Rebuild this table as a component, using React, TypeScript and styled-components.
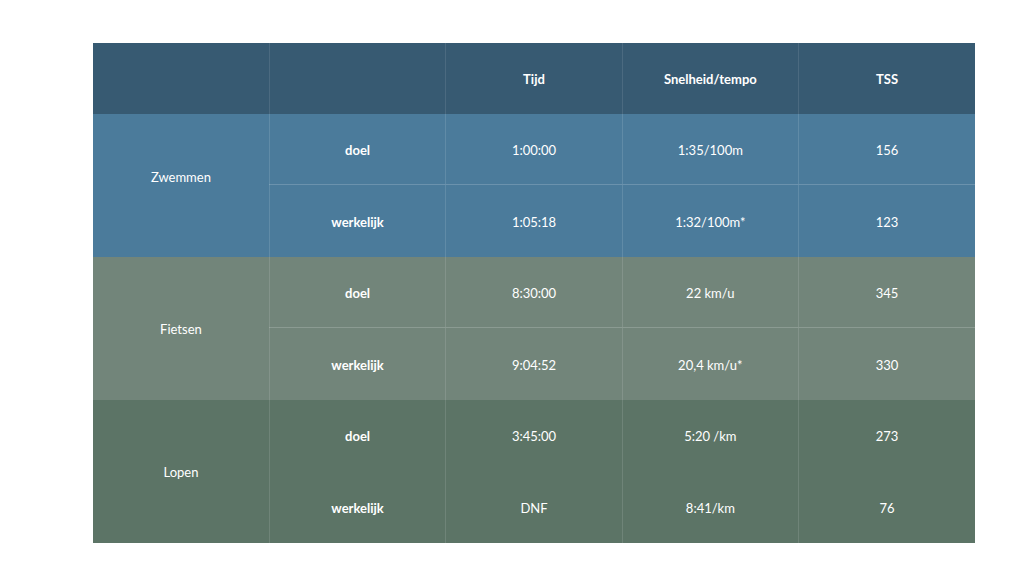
import React from "react";
import styled, { createGlobalStyle } from "styled-components";

const Global = createGlobalStyle`
  html, body { margin: 0; padding: 0; background: #ffffff; }
  body { font-family: Lato, "Open Sans", sans-serif; }
`;

const Page = styled.div`
  width: 1024px;
  height: 576px;
  box-sizing: border-box;
  padding: 43px 0 0 93px;
`;

const Table = styled.table`
  width: 882px;
  border-collapse: collapse;
  table-layout: fixed;
  color: #ffffff;
  font-size: 13px;
`;

const HeadCell = styled.th`
  background: #375a72;
  height: 71px;
  font-weight: 700;
  text-align: center;
  vertical-align: middle;
  padding: 0;
  border-left: 1px solid rgba(255, 255, 255, 0.1);
  &:first-child { border-left: none; }
`;

const tones: Record<string, string> = {
  swim: "#4b7b9b",
  bike: "#72857a",
  run: "#5c7466",
};

const Cell = styled.td<{ $tone: string; $bold?: boolean; $lift?: number; $line?: boolean; $edge?: boolean; $h?: number }>`
  background: ${(p) => tones[p.$tone]};
  height: ${(p) => p.$h ?? 70}px;
  padding: 1px 0 ${(p) => p.$lift ?? 0}px 0;
  text-align: center;
  vertical-align: middle;
  font-weight: ${(p) => (p.$bold ? 700 : 400)};
  border-left: ${(p) => (p.$edge ? "none" : "1px solid rgba(255, 255, 255, 0.12)")};
  border-bottom: ${(p) => (p.$line ? "1px solid rgba(255,255,255,0.18)" : "none")};
`;

type Row = { label: string; tijd: string; snel: string; tss: string };
type Group = { name: string; tone: string; lift: number; line: boolean; rows: Row[] };

const groups: Group[] = [
  {
    name: "Zwemmen",
    tone: "swim",
    lift: 19,
    line: true,
    rows: [
      { label: "doel", tijd: "1:00:00", snel: "1:35/100m", tss: "156" },
      { label: "werkelijk", tijd: "1:05:18", snel: "1:32/100m*", tss: "123" },
    ],
  },
  {
    name: "Fietsen",
    tone: "bike",
    lift: 0,
    line: true,
    rows: [
      { label: "doel", tijd: "8:30:00", snel: "22 km/u", tss: "345" },
      { label: "werkelijk", tijd: "9:04:52", snel: "20,4 km/u*", tss: "330" },
    ],
  },
  {
    name: "Lopen",
    tone: "run",
    lift: 0,
    line: false,
    rows: [
      { label: "doel", tijd: "3:45:00", snel: "5:20 /km", tss: "273" },
      { label: "werkelijk", tijd: "DNF", snel: "8:41/km", tss: "76" },
    ],
  },
];

export default function App() {
  return (
    <>
      <Global />
      <Page>
        <Table>
          <thead>
            <tr>
              <HeadCell />
              <HeadCell />
              <HeadCell>Tijd</HeadCell>
              <HeadCell>Snelheid/tempo</HeadCell>
              <HeadCell>TSS</HeadCell>
            </tr>
          </thead>
          <tbody>
            {groups.map((g) =>
              g.rows.map((r, i) => {
                const line = g.line && i === 0;
                const h = i === 1 ? 71 : line ? 69 : 70;
                return (
                  <tr key={g.name + i}>
                    {i === 0 && (
                      <Cell $tone={g.tone} $edge rowSpan={2} $lift={g.lift} $h={h}>
                        {g.name}
                      </Cell>
                    )}
                    <Cell $tone={g.tone} $bold $line={line} $h={h}>{r.label}</Cell>
                    <Cell $tone={g.tone} $line={line} $h={h}>{r.tijd}</Cell>
                    <Cell $tone={g.tone} $line={line} $h={h}>{r.snel}</Cell>
                    <Cell $tone={g.tone} $line={line} $h={h}>{r.tss}</Cell>
                  </tr>
                );
              })
            )}
          </tbody>
        </Table>
      </Page>
    </>
  );
}
